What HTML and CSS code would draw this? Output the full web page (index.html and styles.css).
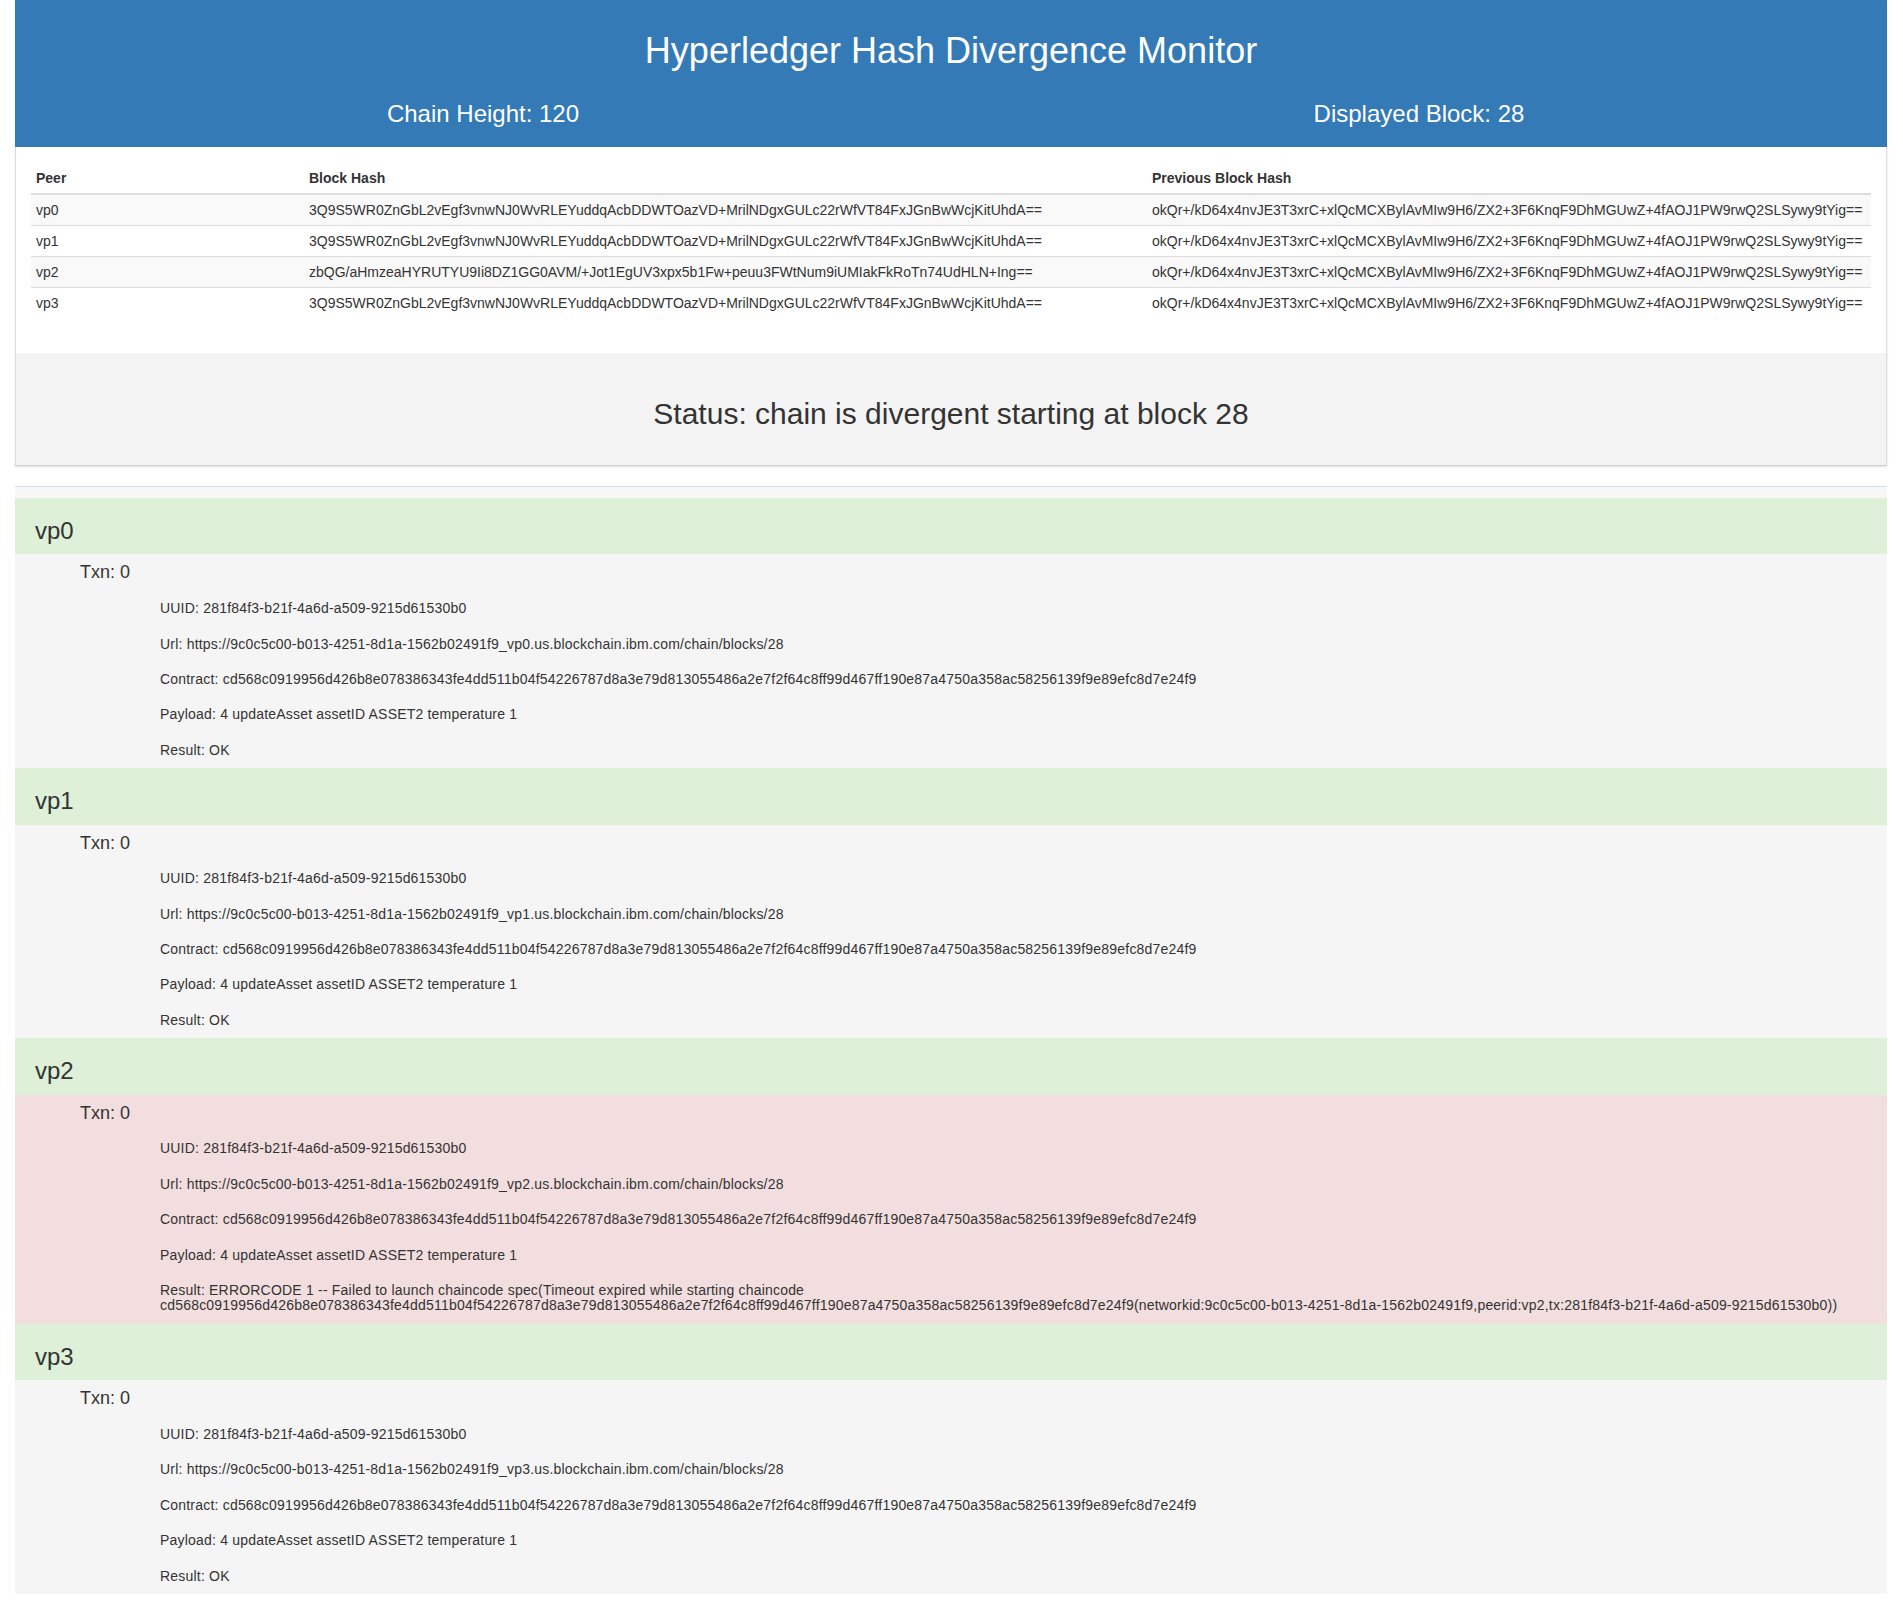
FILE: index.html
```html
<!DOCTYPE html>
<html lang="en">
<head>
<meta charset="utf-8">
<title>Hyperledger Hash Divergence Monitor</title>
<link rel="stylesheet" href="styles.css">
</head>
<body>
<div class="page">
  <div class="panel">
    <div class="panel-heading">
      <h1 class="title">Hyperledger Hash Divergence Monitor</h1>
      <div class="stats">
        <h3 class="stat">Chain Height: 120</h3>
        <h3 class="stat">Displayed Block: 28</h3>
      </div>
    </div>
    <div class="panel-body">
      <table class="hashes">
        <thead>
          <tr><th class="c-peer">Peer</th><th class="c-hash">Block Hash</th><th>Previous Block Hash</th></tr>
        </thead>
        <tbody>
          <tr><td>vp0</td><td>3Q9S5WR0ZnGbL2vEgf3vnwNJ0WvRLEYuddqAcbDDWTOazVD+MrilNDgxGULc22rWfVT84FxJGnBwWcjKitUhdA==</td><td>okQr+/kD64x4nvJE3T3xrC+xlQcMCXBylAvMIw9H6/ZX2+3F6KnqF9DhMGUwZ+4fAOJ1PW9rwQ2SLSywy9tYig==</td></tr>
          <tr><td>vp1</td><td>3Q9S5WR0ZnGbL2vEgf3vnwNJ0WvRLEYuddqAcbDDWTOazVD+MrilNDgxGULc22rWfVT84FxJGnBwWcjKitUhdA==</td><td>okQr+/kD64x4nvJE3T3xrC+xlQcMCXBylAvMIw9H6/ZX2+3F6KnqF9DhMGUwZ+4fAOJ1PW9rwQ2SLSywy9tYig==</td></tr>
          <tr><td>vp2</td><td>zbQG/aHmzeaHYRUTYU9Ii8DZ1GG0AVM/+Jot1EgUV3xpx5b1Fw+peuu3FWtNum9iUMIakFkRoTn74UdHLN+Ing==</td><td>okQr+/kD64x4nvJE3T3xrC+xlQcMCXBylAvMIw9H6/ZX2+3F6KnqF9DhMGUwZ+4fAOJ1PW9rwQ2SLSywy9tYig==</td></tr>
          <tr><td>vp3</td><td>3Q9S5WR0ZnGbL2vEgf3vnwNJ0WvRLEYuddqAcbDDWTOazVD+MrilNDgxGULc22rWfVT84FxJGnBwWcjKitUhdA==</td><td>okQr+/kD64x4nvJE3T3xrC+xlQcMCXBylAvMIw9H6/ZX2+3F6KnqF9DhMGUwZ+4fAOJ1PW9rwQ2SLSywy9tYig==</td></tr>
        </tbody>
      </table>
    </div>
    <div class="panel-footer">
      <h2 class="status">Status: chain is divergent starting at block 28</h2>
    </div>
  </div>

  <div class="peers">
    <section class="peer">
      <h3 class="peer-name">vp0</h3>
      <div class="txn-body">
        <h4 class="txn">Txn: 0</h4>
        <h5 class="field">UUID: 281f84f3-b21f-4a6d-a509-9215d61530b0</h5>
        <h5 class="field">Url: https://9c0c5c00-b013-4251-8d1a-1562b02491f9_vp0.us.blockchain.ibm.com/chain/blocks/28</h5>
        <h5 class="field">Contract: cd568c0919956d426b8e078386343fe4dd511b04f54226787d8a3e79d813055486a2e7f2f64c8ff99d467ff190e87a4750a358ac58256139f9e89efc8d7e24f9</h5>
        <h5 class="field">Payload: 4 updateAsset assetID ASSET2 temperature 1</h5>
        <h5 class="field">Result: OK</h5>
      </div>
    </section>
    <section class="peer">
      <h3 class="peer-name">vp1</h3>
      <div class="txn-body">
        <h4 class="txn">Txn: 0</h4>
        <h5 class="field">UUID: 281f84f3-b21f-4a6d-a509-9215d61530b0</h5>
        <h5 class="field">Url: https://9c0c5c00-b013-4251-8d1a-1562b02491f9_vp1.us.blockchain.ibm.com/chain/blocks/28</h5>
        <h5 class="field">Contract: cd568c0919956d426b8e078386343fe4dd511b04f54226787d8a3e79d813055486a2e7f2f64c8ff99d467ff190e87a4750a358ac58256139f9e89efc8d7e24f9</h5>
        <h5 class="field">Payload: 4 updateAsset assetID ASSET2 temperature 1</h5>
        <h5 class="field">Result: OK</h5>
      </div>
    </section>
    <section class="peer">
      <h3 class="peer-name">vp2</h3>
      <div class="txn-body error">
        <h4 class="txn">Txn: 0</h4>
        <h5 class="field">UUID: 281f84f3-b21f-4a6d-a509-9215d61530b0</h5>
        <h5 class="field">Url: https://9c0c5c00-b013-4251-8d1a-1562b02491f9_vp2.us.blockchain.ibm.com/chain/blocks/28</h5>
        <h5 class="field">Contract: cd568c0919956d426b8e078386343fe4dd511b04f54226787d8a3e79d813055486a2e7f2f64c8ff99d467ff190e87a4750a358ac58256139f9e89efc8d7e24f9</h5>
        <h5 class="field">Payload: 4 updateAsset assetID ASSET2 temperature 1</h5>
        <h5 class="field">Result: ERRORCODE 1 -- Failed to launch chaincode spec(Timeout expired while starting chaincode <span class="nowrap">cd568c0919956d426b8e078386343fe4dd511b04f54226787d8a3e79d813055486a2e7f2f64c8ff99d467ff190e87a4750a358ac58256139f9e89efc8d7e24f9(networkid:9c0c5c00-b013-4251-8d1a-1562b02491f9,peerid:vp2,tx:281f84f3-b21f-4a6d-a509-9215d61530b0))</span></h5>
      </div>
    </section>
    <section class="peer">
      <h3 class="peer-name">vp3</h3>
      <div class="txn-body">
        <h4 class="txn">Txn: 0</h4>
        <h5 class="field">UUID: 281f84f3-b21f-4a6d-a509-9215d61530b0</h5>
        <h5 class="field">Url: https://9c0c5c00-b013-4251-8d1a-1562b02491f9_vp3.us.blockchain.ibm.com/chain/blocks/28</h5>
        <h5 class="field">Contract: cd568c0919956d426b8e078386343fe4dd511b04f54226787d8a3e79d813055486a2e7f2f64c8ff99d467ff190e87a4750a358ac58256139f9e89efc8d7e24f9</h5>
        <h5 class="field">Payload: 4 updateAsset assetID ASSET2 temperature 1</h5>
        <h5 class="field">Result: OK</h5>
      </div>
    </section>
  </div>
</div>
</body>
</html>
```

FILE: styles.css
```css
html, body {
  margin: 0;
  padding: 0;
  background: #ffffff;
}

body {
  font-family: "Liberation Sans", Arial, Helvetica, sans-serif;
  font-size: 14px;
  line-height: 1.42857;
  color: #333333;
}

.page {
  width: 1872px;
  margin-left: 15px;
}

/* ---------- top panel ---------- */
.panel {
  background: #ffffff;
  border: 1px solid #dddddd;
  border-bottom-color: #cfcfcf;
  box-shadow: 0 1px 2px rgba(0, 0, 0, 0.12);
  margin-bottom: 20px;
}

.panel-heading {
  background: #337ab7;
  color: #ffffff;
  margin: -1px -1px 0;
  padding: 11px 15px 10px;
}

.title {
  margin: 20px 0 10px;
  font-size: 36px;
  font-weight: normal;
  line-height: 1.1;
  text-align: center;
}

.stats {
  display: flex;
  margin: 0 -15px;
}

.stat {
  flex: 1 1 0;
  margin: 20px 0 10px;
  font-size: 24px;
  font-weight: normal;
  line-height: 1.1;
  text-align: center;
}

.panel-body {
  padding: 16px 15px 15px;
}

.hashes {
  width: 100%;
  border-collapse: collapse;
  border-spacing: 0;
  margin-bottom: 20px;
  table-layout: fixed;
}

.hashes th,
.hashes td {
  padding: 5px;
  line-height: 20px;
  text-align: left;
  white-space: nowrap;
  vertical-align: top;
}

.hashes th {
  font-weight: bold;
  border-bottom: 2px solid #dddddd;
}

.hashes td {
  border-top: 1px solid #dddddd;
}

.hashes .c-peer {
  width: 263px;
}

.hashes .c-hash {
  width: 833px;
}

.hashes tbody tr:nth-child(odd) {
  background: #f9f9f9;
}

.panel-footer {
  background: #f4f4f4;
  padding: 44px 15px 35px;
}

.status {
  margin: 0;
  font-size: 30px;
  font-weight: normal;
  line-height: 1.1;
  text-align: center;
}

/* ---------- peer list ---------- */
.peers {
  border-top: 1px solid #c9e3ee;
  background: #f7f7f7;
  padding-top: 11px;
}

.peer-name {
  margin: 0;
  padding: 20px 20px 10px;
  background: #dff0d8;
  font-size: 24px;
  font-weight: normal;
  line-height: 1.1;
}

.txn-body {
  display: flex;
  flex-direction: column;
  background: #f5f5f5;
}

.txn-body.error {
  background: #f2dede;
}

.txn {
  margin: 9px 0 8px;
  padding-left: 65px;
  font-size: 18px;
  font-weight: normal;
  line-height: 1.1;
}

.field {
  margin: 10px 0;
  padding-left: 145px;
  padding-right: 10px;
  font-size: 14px;
  font-weight: normal;
  line-height: 1.1;
  letter-spacing: 0.2px;
}

.nowrap {
  white-space: nowrap;
}
```
